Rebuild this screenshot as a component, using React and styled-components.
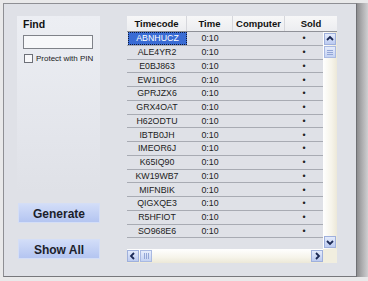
import React from 'react'
import styled, { createGlobalStyle } from 'styled-components'

const codes = [
  'ABNHUCZ', 'ALE4YR2', 'E0BJ863', 'EW1IDC6', 'GPRJZX6', 'GRX4OAT', 'H62ODTU',
  'IBTB0JH', 'IMEOR6J', 'K65IQ90', 'KW19WB7', 'MIFNBIK', 'QIGXQE3', 'R5HFIOT', 'SO968E6',
]

const Global = createGlobalStyle`
  body {
    margin: 0;
    background: #e9e9ea;
    font-family: "Liberation Sans", Arial, sans-serif;
  }
`

const Arrow = ({ dir }) => {
  const paths = {
    up: 'M2 6 L5 3 L8 6',
    down: 'M2 4 L5 7 L8 4',
    left: 'M6 2 L3 5 L6 8',
    right: 'M4 2 L7 5 L4 8',
  }
  return (
    <svg width="10" height="10" viewBox="0 0 10 10">
      <path d={paths[dir]} fill="none" stroke="#1c2a55" strokeWidth="1.8" />
    </svg>
  )
}

const App = () => {
  return (
    <Page>
      <Global />
      <Frame>
        <LeftCol>
          <FindBox>
            <Title>Find</Title>
            <TextBox />
            <CheckRow>
              <Check />
              <span>Protect with PIN</span>
            </CheckRow>
          </FindBox>
          <Buttons>
            <BigButton>Generate</BigButton>
            <BigButton>Show All</BigButton>
          </Buttons>
        </LeftCol>
        <Grid>
          <Header>
            <HeadCell>Timecode</HeadCell>
            <HeadCell>Time</HeadCell>
            <HeadCell>Computer</HeadCell>
            <HeadCell last>Sold</HeadCell>
          </Header>
          <Body>
            <Rows>
              {codes.map((c, i) => (
                <Row key={c}>
                  <Cell selected={i === 0}>{c}</Cell>
                  <Cell>0:10</Cell>
                  <Cell />
                  <Cell>•</Cell>
                </Row>
              ))}
            </Rows>
            <VScroll>
              <ScrollBtn><Arrow dir="up" /></ScrollBtn>
              <Thumb vertical><Grip vertical /></Thumb>
              <Spacer />
              <ScrollBtn><Arrow dir="down" /></ScrollBtn>
            </VScroll>
          </Body>
          <HScrollRow>
            <HScroll>
              <ScrollBtn><Arrow dir="left" /></ScrollBtn>
              <Thumb><Grip /></Thumb>
              <Spacer />
              <ScrollBtn><Arrow dir="right" /></ScrollBtn>
            </HScroll>
            <Corner />
          </HScrollRow>
        </Grid>
      </Frame>
      <Shade />
    </Page>
  )
}

const Page = styled.div`
  display: flex;
  width: 368px;
  height: 281px;
  padding: 3px 0 4px 3px;
  box-sizing: border-box;
`
const Frame = styled.div`
  flex: 1;
  display: flex;
  gap: 27px;
  border-top: 1px solid #8e8f94;
  border-left: 1px solid #8e8f94;
  border-bottom: 1px solid #77787c;
  border-right: 1px solid #6f7074;
  background: #dfe1e7;
  padding: 12px 0 0 13px;
`
const Shade = styled.div`
  width: 11px;
  background: linear-gradient(to right, #8d8d8f, #a9a9ab 40%, #cfcfd1);
`
const LeftCol = styled.div`
  width: 83px;
  display: flex;
  flex-direction: column;
`
const FindBox = styled.div`
  height: 176px;
  background: linear-gradient(to bottom, #eceef3, #e3e5eb 70%, #dfe1e7);
  padding: 2px 0 0 6px;
  box-sizing: border-box;
`
const Title = styled.div`
  font-weight: bold;
  font-size: 10.5px;
  color: #111;
  height: 17px;
`
const TextBox = styled.div`
  width: 68px;
  height: 12px;
  border: 1px solid #7f8289;
  background: #f7f8fa;
`
const CheckRow = styled.div`
  display: flex;
  align-items: center;
  gap: 3px;
  margin-top: 5px;
  margin-left: 1px;
  font-size: 8px;
  color: #222;
`
const Check = styled.div`
  width: 7px;
  height: 7px;
  border: 1px solid #6d7078;
  background: #f8f8fa;
`
const Buttons = styled.div`
  display: flex;
  flex-direction: column;
  gap: 16px;
  margin-top: 11px;
`
const BigButton = styled.div`
  height: 20px;
  width: 82px;
  margin-left: 1px;
  box-sizing: border-box;
  border: 1px solid #d4def6;
  background: linear-gradient(to bottom, #d2ddf8, #b4c5f1);
  display: flex;
  align-items: center;
  justify-content: center;
  font-weight: bold;
  font-size: 12px;
  color: #1b1e2b;
  padding-top: 2px;
`
const Grid = styled.div`
  width: 210px;
  display: flex;
  flex-direction: column;
  height: 247px;
`
const Header = styled.div`
  display: grid;
  grid-template-columns: 60px 46px 52px 52px;
  height: 15px;
  border-bottom: 1px solid #8f9198;
  background: linear-gradient(to bottom, #f7f7f8, #ecedf0);
`
const HeadCell = styled.div`
  display: flex;
  align-items: center;
  justify-content: center;
  font-weight: bold;
  font-size: 9.5px;
  color: #111;
  border-right: ${p => (p.last ? 'none' : '1px solid #d6d7dc')};
`
const Body = styled.div`
  flex: 1;
  display: flex;
  background: #dfe1e7;
`
const Rows = styled.div`
  width: 196px;
  display: flex;
  flex-direction: column;
`
const Row = styled.div`
  display: grid;
  grid-template-columns: 60px 46px 52px 38px;
  height: 13.75px;
  box-sizing: border-box;
  border-bottom: 1px solid #a8abb3;
`
const Cell = styled.div`
  display: flex;
  align-items: center;
  justify-content: center;
  font-size: 8.8px;
  background: ${p => (p.selected ? '#3a6cd4' : 'transparent')};
  color: ${p => (p.selected ? '#fff' : '#222')};
  outline: ${p => (p.selected ? '1px dotted #0e1a3a' : 'none')};
  outline-offset: -1px;
  margin-left: ${p => (p.selected ? '1px' : '0')};
`
const VScroll = styled.div`
  width: 14px;
  display: flex;
  flex-direction: column;
  align-items: center;
  background: linear-gradient(to right, #ffffff, #f6f4ea 60%, #ece8d8);
  padding: 1px 0;
`
const HScrollRow = styled.div`
  display: flex;
  height: 14px;
`
const HScroll = styled.div`
  width: 196px;
  display: flex;
  align-items: center;
  background: linear-gradient(to bottom, #ffffff, #f6f4ea 60%, #ece8d8);
`
const Corner = styled.div`
  flex: 1;
  background: #f1eedf;
`
const ScrollBtn = styled.div`
  width: 12px;
  height: 12px;
  box-sizing: border-box;
  border: 1px solid #9fb0dc;
  background: linear-gradient(to bottom, #e4ebfb, #bccbf1);
  display: flex;
  align-items: center;
  justify-content: center;
`
const Thumb = styled.div`
  width: 12px;
  height: 12px;
  box-sizing: border-box;
  border: 1px solid #a9b9e2;
  background: linear-gradient(to bottom, #e6ecfb, #c4d2f3);
  display: flex;
  align-items: center;
  justify-content: center;
  margin: ${p => (p.vertical ? '1px 0 0' : '0 0 0 1px')};
`
const Grip = styled.div`
  width: ${p => (p.vertical ? '6px' : '5px')};
  height: ${p => (p.vertical ? '5px' : '6px')};
  ${p => (p.vertical
    ? 'background: repeating-linear-gradient(to bottom, #93a6d6 0 1px, transparent 1px 2px);'
    : 'background: repeating-linear-gradient(to right, #93a6d6 0 1px, transparent 1px 2px);')}
`
const Spacer = styled.div`
  flex: 1;
`

export default App
